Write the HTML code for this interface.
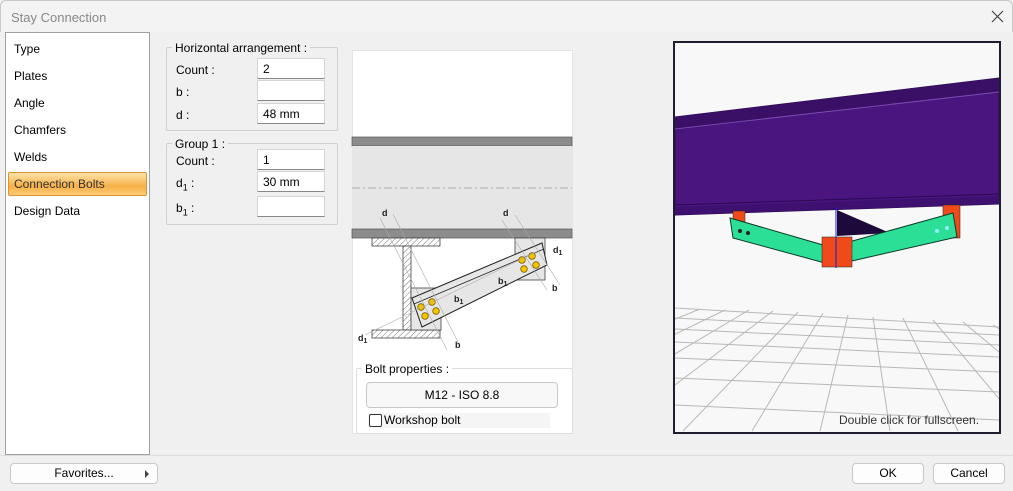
<!DOCTYPE html>
<html><head><meta charset="utf-8"><style>
*{box-sizing:border-box;margin:0;padding:0}
body{width:1013px;height:491px;overflow:hidden;background:#f0f0f0;font-family:"Liberation Sans",sans-serif;font-size:12px;color:#000;position:relative}
.abs{position:absolute}
.title{left:0;top:0;width:1013px;height:32px;background:#f3f3f3;border:1px solid #c8c8c8;border-bottom:none;border-radius:6px 6px 0 0}
.title span{position:absolute;left:10px;top:9px;color:#888;font-size:13px}
.list{left:5px;top:32px;width:145px;height:423px;background:#fff;border:1px solid #a0a0a0}
.item{position:absolute;left:8px;font-size:12px}
.sel{left:2px;top:139px;width:139px;height:24px;background:linear-gradient(#fde3a8,#f8b048 60%,#fbcb74);border:1px solid #d89530;border-radius:2px}
.grp{border:1px solid #d0d0d0;border-radius:2px}
.gt{position:absolute;background:#f0f0f0;padding:0 3px;top:-7px;left:5px}
.inp{position:absolute;background:#fff;border:1px solid #d5d5d5;border-bottom:1px solid #888;height:21px;padding:3px 5px;font-size:12px}
.lbl{position:absolute;font-size:12px}
.btn{position:absolute;background:#fdfdfd;border:1px solid #c8c8c8;border-radius:4px;text-align:center;font-size:12px}
</style></head><body>
<div class="abs title"><span>Stay Connection</span>
<svg class="abs" style="left:990px;top:9px" width="13" height="13"><path d="M1 1L12 12M12 1L1 12" stroke="#444" stroke-width="1.2"/></svg></div>
<div class="abs" style="left:0;top:455px;width:1013px;height:1px;background:#dcdcdc"></div>
<div class="abs list">
<div class="abs sel"></div>
<div class="item" style="top:9px">Type</div>
<div class="item" style="top:36px">Plates</div>
<div class="item" style="top:63px">Angle</div>
<div class="item" style="top:90px">Chamfers</div>
<div class="item" style="top:117px">Welds</div>
<div class="item" style="top:144px;color:#333">Connection Bolts</div>
<div class="item" style="top:171px">Design Data</div>
</div>

<div class="abs grp" style="left:166px;top:47px;width:172px;height:84px"><div class="gt">Horizontal arrangement :</div></div>
<div class="lbl" style="left:176px;top:63px">Count :</div>
<div class="lbl" style="left:176px;top:85px">b :</div>
<div class="lbl" style="left:176px;top:108px">d :</div>
<div class="inp" style="left:257px;top:58px;width:68px">2</div>
<div class="inp" style="left:257px;top:80px;width:68px"></div>
<div class="inp" style="left:257px;top:103px;width:68px">48 mm</div>

<div class="abs grp" style="left:166px;top:143px;width:172px;height:82px"><div class="gt">Group 1 :</div></div>
<div class="lbl" style="left:176px;top:154px">Count :</div>
<div class="lbl" style="left:176px;top:176px">d<sub style="font-size:9px">1</sub> :</div>
<div class="lbl" style="left:176px;top:201px">b<sub style="font-size:9px">1</sub> :</div>
<div class="inp" style="left:257px;top:149px;width:68px">1</div>
<div class="inp" style="left:257px;top:171px;width:68px">30 mm</div>
<div class="inp" style="left:257px;top:196px;width:68px"></div>

<div class="abs" style="left:352px;top:50px;width:221px;height:384px;background:#fff;border:1px solid #e4e4e4"></div>
<svg class="abs" style="left:0;top:0" width="1013" height="491">
<defs><pattern id="h" width="4" height="4" patternUnits="userSpaceOnUse" patternTransform="rotate(45)"><rect width="4" height="4" fill="#fff"/><line x1="0" y1="0" x2="0" y2="4" stroke="#777" stroke-width="1"/></pattern></defs>
<rect x="352" y="137" width="220" height="9" fill="#8c8c8c" stroke="#555" stroke-width=".7"/>
<rect x="352" y="146" width="220" height="83" fill="#e6e6e6"/>
<line x1="352" y1="188" x2="572" y2="188" stroke="#999" stroke-dasharray="8 3 2 3" stroke-width=".8"/>
<rect x="352" y="229" width="220" height="9" fill="#8c8c8c" stroke="#555" stroke-width=".7"/>
<rect x="372" y="238" width="68" height="8" fill="url(#h)" stroke="#444" stroke-width=".8"/>
<rect x="403" y="246" width="8" height="84" fill="url(#h)" stroke="#444" stroke-width=".8"/>
<rect x="372" y="330" width="68" height="8" fill="url(#h)" stroke="#444" stroke-width=".8"/>
<rect x="411" y="288" width="30" height="42" fill="#e6e6e6" stroke="#444" stroke-width=".8"/>
<rect x="515" y="238" width="30" height="42" fill="#e6e6e6" stroke="#444" stroke-width=".8"/>
<polygon points="412,298 542,243 547,265 422,327" fill="#e6e6e6" stroke="#222" stroke-width="1"/>
<line x1="414" y1="304" x2="544" y2="249" stroke="#222" stroke-width=".8"/>
<g fill="#f5c400" stroke="#7a6000" stroke-width=".8">
<circle cx="421" cy="307" r="3.3"/><circle cx="432" cy="302" r="3.3"/><circle cx="425" cy="316" r="3.3"/><circle cx="436" cy="311" r="3.3"/>
<circle cx="522" cy="260" r="3.3"/><circle cx="532" cy="256" r="3.3"/><circle cx="524" cy="269" r="3.3"/><circle cx="536" cy="265" r="3.3"/></g>
<g stroke="#aaa" stroke-width=".6"><line x1="380" y1="218" x2="447" y2="350"/><line x1="393" y1="214" x2="460" y2="346"/><line x1="502" y1="220" x2="547" y2="290"/><line x1="515" y1="215" x2="560" y2="285"/><line x1="365" y1="335" x2="540" y2="250"/></g>
<g font-size="9" font-weight="bold" fill="#222" font-family="Liberation Sans"><text x="382" y="216">d</text><text x="503" y="216">d</text><text x="553" y="253">d<tspan font-size="7" dy="2">1</tspan></text><text x="498" y="284">b<tspan font-size="7" dy="2">1</tspan></text><text x="454" y="302">b<tspan font-size="7" dy="2">1</tspan></text><text x="552" y="291">b</text><text x="455" y="348">b</text><text x="358" y="341">d<tspan font-size="7" dy="2">1</tspan></text></g>

<rect x="675" y="43" width="324" height="389" fill="#f8f8f8"/>
<clipPath id="c"><rect x="675" y="43" width="324" height="389"/></clipPath>
<g clip-path="url(#c)" stroke="#b8b8b8" stroke-width="1" fill="none">
<line x1="675" y1="308" x2="999" y2="327"/><line x1="675" y1="318" x2="999" y2="335"/><line x1="675" y1="329" x2="999" y2="345"/><line x1="675" y1="342" x2="999" y2="357"/><line x1="675" y1="358" x2="999" y2="372"/><line x1="675" y1="378" x2="999" y2="392"/><line x1="675" y1="405" x2="999" y2="420"/><line x1="675" y1="438" x2="999" y2="452"/>
<line x1="700" y1="309" x2="400" y2="431"/><line x1="725" y1="310" x2="476" y2="431"/><line x1="749" y1="310" x2="545" y2="431"/><line x1="773" y1="311" x2="614" y2="431"/><line x1="798" y1="312" x2="683" y2="431"/><line x1="823" y1="313" x2="752" y2="431"/><line x1="848" y1="315" x2="820" y2="431"/><line x1="873" y1="317" x2="890" y2="431"/><line x1="903" y1="318" x2="958" y2="431"/><line x1="933" y1="320" x2="1026" y2="431"/><line x1="963" y1="322" x2="1094" y2="431"/><line x1="993" y1="325" x2="1160" y2="431"/>
</g>
<g clip-path="url(#c)">
<polygon points="675,117 999,78 999,204 675,215" fill="#4b1580" stroke="#2a0a50"/>
<polygon points="675,117 999,78 999,92 675,130" fill="#3a0f66"/>
<line x1="675" y1="129" x2="999" y2="92" stroke="#7a4ab0" stroke-width="1"/>
<line x1="675" y1="205" x2="999" y2="194" stroke="#2a0a50"/>
<polygon points="675,207 999,196 999,204 675,215" fill="#3e1070"/>
<polygon points="837,210 890,233 837,236" fill="#1e0a3a"/>
<rect x="733" y="211" width="12" height="27" fill="#f04a1a" stroke="#222" stroke-width=".5"/>
<rect x="943" y="205" width="17" height="33" fill="#f04a1a" stroke="#222" stroke-width=".5"/>
<polygon points="730,218 830,247 825,263 733,238" fill="#2be096" stroke="#0d3a28"/>
<polygon points="838,245 953,213 957,237 843,263" fill="#2be096" stroke="#0d3a28"/>
<rect x="822" y="237" width="30" height="30" fill="#f04a1a" stroke="#222" stroke-width=".5"/>
<line x1="836" y1="208" x2="836" y2="268" stroke="#1020e0" stroke-width="1"/>
<circle cx="740" cy="231" r="2" fill="#222"/><circle cx="748" cy="233" r="2" fill="#222"/>
<circle cx="937" cy="231" r="2" fill="#9ef"/><circle cx="947" cy="228" r="2" fill="#9ef"/>
</g>
<rect x="674" y="42" width="326" height="391" fill="none" stroke="#1e1e30" stroke-width="2"/>
<text x="839" y="424" font-size="12" fill="#333" font-family="Liberation Sans">Double click for fullscreen.</text>
</svg>

<div class="abs grp" style="left:356px;top:368px;width:217px;height:66px;border-color:#ddd"><div class="gt" style="background:#fff">Bolt properties :</div></div>
<div class="btn" style="left:366px;top:382px;width:192px;height:26px;line-height:24px;background:#f8f8f8">M12 - ISO 8.8</div>
<div class="abs" style="left:368px;top:413px;width:182px;height:15px;background:#f5f5f5"></div>
<div class="abs" style="left:369px;top:414px;width:13px;height:13px;border:1px solid #333;border-radius:2px;background:#fff"></div>
<div class="lbl" style="left:384px;top:413px">Workshop bolt</div>

<div class="btn" style="left:10px;top:463px;width:148px;height:21px;line-height:19px">Favorites...</div>
<svg class="abs" style="left:144px;top:470px" width="6" height="8"><path d="M1 0L5 4L1 8Z" fill="#444"/></svg>
<div class="btn" style="left:852px;top:463px;width:72px;height:21px;line-height:19px">OK</div>
<div class="btn" style="left:933px;top:463px;width:72px;height:21px;line-height:19px">Cancel</div>
</body></html>
